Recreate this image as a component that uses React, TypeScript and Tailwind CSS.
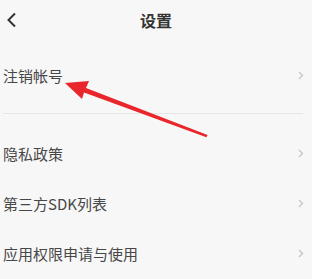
import React from 'react';

const Chevron = () => (
  <svg width="6" height="9" viewBox="0 0 6 9" className="shrink-0">
    <path d="M1 1l3.5 3.5L1 8" fill="none" stroke="#c6c6c6" strokeWidth="1.4" />
  </svg>
);

const Row = ({ label, h = 'h-[50px]' }: { label: string; h?: string }) => (
  <div className={`flex items-center justify-between pl-[3px] pr-[8px] ${h}`}>
    <span className="text-[15px] leading-none text-[#474747]">{label}</span>
    <Chevron />
  </div>
);

const App: React.FC = () => {
  return (
    <div
      className="relative w-[312px] h-[279px] overflow-hidden bg-[#f7f7f7]"
      style={{ fontFamily: '"Noto Sans CJK SC", "Noto Sans", sans-serif' }}
    >
      {/* Header */}
      <div className="relative flex items-center justify-center h-[40px]">
        <svg width="12" height="16" viewBox="0 0 12 16" className="absolute left-[6px] top-[12px]">
          <path d="M9 1.5L2.5 8 9 14.5" fill="none" stroke="#333" strokeWidth="2" />
        </svg>
        <span className="text-[16px] font-bold text-[#333] leading-none">设置</span>
      </div>

      <Row label="注销帐号" h="h-[70px]" />
      <div className="mt-[3px] ml-[3px] w-[300px] h-px bg-[#e6e6e6]" />
      <div className="pt-[14px]">
        <Row label="隐私政策" />
        <Row label="第三方SDK列表" />
        <Row label="应用权限申请与使用" />
      </div>

      {/* Annotation arrow */}
      <svg className="absolute left-0 top-0 pointer-events-none" width="312" height="279">
        <polygon
          points="65,83 89,81 86,88 207.6,135 206.4,137.2 84,92.5 82,99"
          fill="#e8262b"
        />
      </svg>
    </div>
  );
};

export default App;
